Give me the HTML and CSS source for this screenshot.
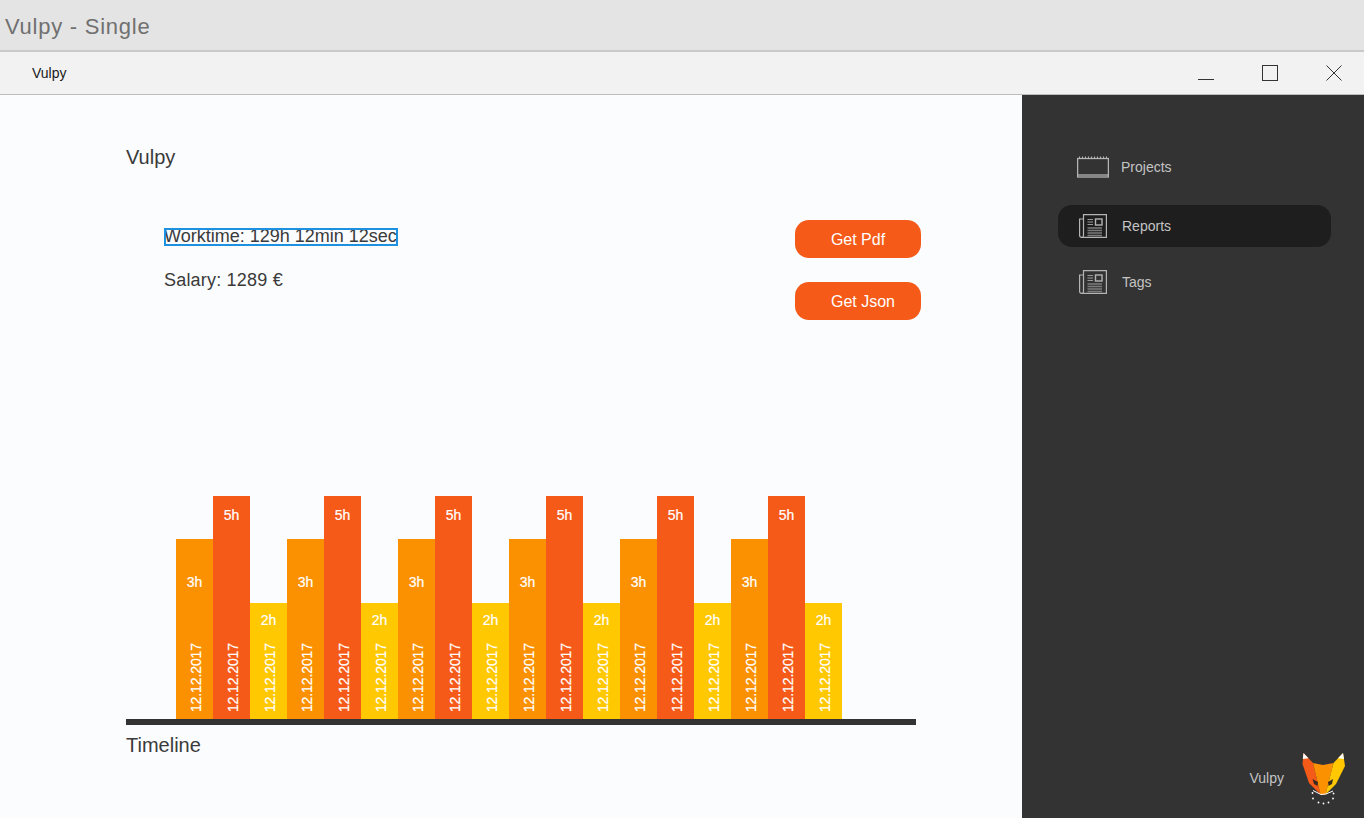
FILE: index.html
```html
<!DOCTYPE html>
<html lang="en">
<head>
<meta charset="utf-8">
<title>Vulpy - Single</title>
<link rel="stylesheet" href="styles.css">
</head>
<body>
<header class="os-title">Vulpy - Single</header>
<div class="win-bar">
  <span class="win-name">Vulpy</span>
  <div class="win-controls">
    <svg class="ctl" width="16" height="16" viewBox="0 0 16 16"><path d="M0 14.500h16" stroke="#333" fill="none"/></svg>
    <svg class="ctl" width="16" height="16" viewBox="0 0 16 16"><rect x=".5" y=".5" width="15" height="15" stroke="#333" fill="none"/></svg>
    <svg class="ctl" width="16" height="16" viewBox="0 0 16 16"><path d="M.5.5l15 15M15.500.5l-15 15" stroke="#333" fill="none"/></svg>
  </div>
</div>
<div class="app">
  <main class="main">
    <h1 class="title">Vulpy</h1>
    <section class="summary">
      <div class="facts">
        <p class="fact"><span class="selected">Worktime: 129h 12min 12sec</span></p>
        <p class="fact fact-salary">Salary: 1289 €</p>
      </div>
      <div class="actions">
        <button class="btn">Get Pdf</button>
        <button class="btn btn-json">Get Json</button>
      </div>
    </section>
    <section class="chart">
      <div class="bars">
        <div class="bar h3"><span class="hours">3h</span><span class="date">12.12.2017</span></div>
        <div class="bar h5"><span class="hours">5h</span><span class="date">12.12.2017</span></div>
        <div class="bar h2"><span class="hours">2h</span><span class="date">12.12.2017</span></div>
        <div class="bar h3"><span class="hours">3h</span><span class="date">12.12.2017</span></div>
        <div class="bar h5"><span class="hours">5h</span><span class="date">12.12.2017</span></div>
        <div class="bar h2"><span class="hours">2h</span><span class="date">12.12.2017</span></div>
        <div class="bar h3"><span class="hours">3h</span><span class="date">12.12.2017</span></div>
        <div class="bar h5"><span class="hours">5h</span><span class="date">12.12.2017</span></div>
        <div class="bar h2"><span class="hours">2h</span><span class="date">12.12.2017</span></div>
        <div class="bar h3"><span class="hours">3h</span><span class="date">12.12.2017</span></div>
        <div class="bar h5"><span class="hours">5h</span><span class="date">12.12.2017</span></div>
        <div class="bar h2"><span class="hours">2h</span><span class="date">12.12.2017</span></div>
        <div class="bar h3"><span class="hours">3h</span><span class="date">12.12.2017</span></div>
        <div class="bar h5"><span class="hours">5h</span><span class="date">12.12.2017</span></div>
        <div class="bar h2"><span class="hours">2h</span><span class="date">12.12.2017</span></div>
        <div class="bar h3"><span class="hours">3h</span><span class="date">12.12.2017</span></div>
        <div class="bar h5"><span class="hours">5h</span><span class="date">12.12.2017</span></div>
        <div class="bar h2"><span class="hours">2h</span><span class="date">12.12.2017</span></div>
      </div>
      <div class="axis"></div>
      <div class="timeline">Timeline</div>
    </section>
  </main>
  <aside class="side">
    <nav class="nav">
      <a class="nav-item nav-projects">
        <svg class="ico-cal" width="32" height="22" viewBox="0 0 32 22" fill="none" stroke="#b4b4b4" stroke-width="1.300"><rect x=".6" y="2.500" width="30.800" height="18.500"/><path d="M.6 19h30.800"/><path d="M2.500 3V.5M5.500 3V.5M8.500 3V.5M11.500 3V.5M14.500 3V.5M17.500 3V.5M20.500 3V.5M23.500 3V.5M26.500 3V.5M29.500 3V.5" stroke-width="1"/></svg>
        <span>Projects</span>
      </a>
      <a class="nav-item nav-active">
        <svg class="ico-news" width="28" height="24" viewBox="0 0 28 24" fill="none" stroke="#b4b4b4" stroke-width="1.200"><path d="M4.500 5H.6v16.500a1.800 1.800 0 0 0 1.800 1.800h25V.6H4.500v20.900a1.800 1.800 0 0 1-1.800 1.800"/><rect x="16.500" y="5" width="6.500" height="6" stroke-width="1.400"/><path d="M8.500 5.500H14M8.500 8H14M8.500 10.500H14" stroke="#9a9a9a" stroke-width="1"/><path d="M8.500 14H23M8.500 16.500H23M8.500 19H23M8.500 21.500H23" stroke="#7c7c7c" stroke-width="1.500"/></svg>
        <span>Reports</span>
      </a>
      <a class="nav-item nav-tags">
        <svg class="ico-news" width="28" height="24" viewBox="0 0 28 24" fill="none" stroke="#b4b4b4" stroke-width="1.200"><path d="M4.500 5H.6v16.500a1.800 1.800 0 0 0 1.800 1.800h25V.6H4.500v20.900a1.800 1.800 0 0 1-1.800 1.800"/><rect x="16.500" y="5" width="6.500" height="6" stroke-width="1.400"/><path d="M8.500 5.500H14M8.500 8H14M8.500 10.500H14" stroke="#9a9a9a" stroke-width="1"/><path d="M8.500 14H23M8.500 16.500H23M8.500 19H23M8.500 21.500H23" stroke="#7c7c7c" stroke-width="1.500"/></svg>
        <span>Tags</span>
      </a>
    </nav>
    <div class="brand">
      <span>Vulpy</span>
      <svg class="fox" width="44" height="54" viewBox="0 0 44 54">
        <path d="M1.500 13L2.500 2 12 12 19.500 43.500 8 32Z" fill="#f55a18"/>
        <path d="M12 12L22 14 32.500 12 24.500 43.500 19.500 43.500Z" fill="#fb9100"/>
        <path d="M32.500 12L42 2 44 15 35 33 24.500 43.500Z" fill="#ffc800"/>
        <path d="M2.500 2L1.800 8 7.500 7.200Z" fill="#fff"/>
        <path d="M42 2L43 8 37 7.200Z" fill="#fff"/>
        <path d="M11.500 28L17 31 16.500 35 13 33Z M32 28L27 31 27.500 35 31 33Z" fill="#3a2a20"/>
        <path d="M12 39.500L20 43.500 25 43 32 40" stroke="#fff" fill="none"/>
        <g fill="#fff"><circle cx="11.500" cy="42" r=".9"/><circle cx="12" cy="47.500" r=".9"/><circle cx="17.500" cy="51.500" r=".9"/><circle cx="22.500" cy="52.500" r=".9"/><circle cx="27.500" cy="51.500" r=".9"/><circle cx="32" cy="47.500" r=".9"/><circle cx="32.500" cy="42.500" r=".9"/></g>
      </svg>
    </div>
  </aside>
</div>
</body>
</html>
```
FILE: styles.css
```css
* { box-sizing: border-box; }
html, body { margin: 0; height: 100%; }
body {
  width: 1364px; height: 818px; overflow: hidden;
  display: flex; flex-direction: column;
  font-family: "Liberation Sans", Arial, sans-serif;
  color: #3a3a3a; background: #fbfcfe;
}
.os-title {
  height: 52px; flex: none;
  padding: 14px 0 0 5px;
  background: #e4e4e4; border-bottom: 2px solid #c9c9c9;
  color: #707070; font-size: 22px; line-height: 25px; letter-spacing: .75px;
}
.win-bar {
  height: 43px; flex: none;
  display: flex; justify-content: space-between; align-items: center;
  padding-left: 32px;
  background: #f2f2f2; border-bottom: 1px solid #bdbdbd;
}
.win-name { font-size: 14px; color: #1a1a1a; }
.win-controls { display: flex; gap: 48px; padding-right: 22px; }
.ctl { display: block; }
.app { flex: 1; display: flex; min-height: 0; }
.main { width: 1022px; flex: none; padding: 51px 106px 0 126px; display: flex; flex-direction: column; }
.title { margin: 0; font-size: 20px; line-height: 23px; font-weight: 400; }
.summary { display: flex; justify-content: space-between; padding: 51px 0 0 38px; }
.facts { display: flex; flex-direction: column; gap: 25px; padding-top: 8px; }
.fact { margin: 0; font-size: 18px; line-height: 18px; }
.fact-salary { letter-spacing: .2px; }
.selected { outline: 2px solid #1e90e0; outline-offset: -2px; display: block; width: 234px; height: 18px; line-height: 16px; white-space: nowrap; }
.actions { display: flex; flex-direction: column; gap: 24px; margin-right: -5px; }
.btn {
  width: 126px; height: 38px; border: 0; border-radius: 14px;
  background: #f55a18; color: #fff; font: 16px "Liberation Sans", Arial, sans-serif;
  padding: 2px 0 0 0;
}
.btn-json { padding-left: 10px; }
.chart { margin-top: 176px; display: flex; flex-direction: column; }
.bars { height: 223px; display: flex; align-items: flex-end; padding-left: 50px; }
.bar {
  width: 37px; flex: none; color: #fff;
  display: flex; flex-direction: column; align-items: center; justify-content: space-between;
  padding-bottom: 7px;
}
.h3 { height: 180px; background: #fb9100; padding-top: 35px; }
.h5 { height: 223px; background: #f55a18; padding-top: 11px; }
.h2 { height: 116px; background: #ffc800; padding-top: 9px; }
.hours { font-size: 14px; line-height: 16px; -webkit-text-stroke: .2px #fff; }
.date { writing-mode: vertical-rl; transform: rotate(180deg); font-size: 14px; line-height: 16px; white-space: nowrap; margin-left: 2px; letter-spacing: -.1px; -webkit-text-stroke: .2px #fff; }
.axis { height: 6px; background: #333; }
.timeline { font-size: 20px; line-height: 23px; margin-top: 9px; }
.side { flex: 1; background: #333; display: flex; flex-direction: column; justify-content: space-between; color: #c4c4c4; padding-bottom: 13px; }
.nav { display: flex; flex-direction: column; padding: 60px 33px 0 36px; font-size: 14px; }
.nav-item { display: flex; align-items: center; border-radius: 14px; }
.nav-projects { padding-left: 19px; gap: 12px; height: 24px; margin-bottom: 26px; }
.nav-active { background: #1e1e1e; padding-left: 21px; gap: 15px; height: 42px; }
.nav-tags { padding-left: 21px; gap: 15px; height: 42px; margin-top: 14px; }
.ico-cal, .ico-news { display: block; flex: none; }
.brand { display: flex; align-items: center; justify-content: flex-end; gap: 17px; padding-right: 19px; font-size: 14px; }
.fox { display: block; }
```
